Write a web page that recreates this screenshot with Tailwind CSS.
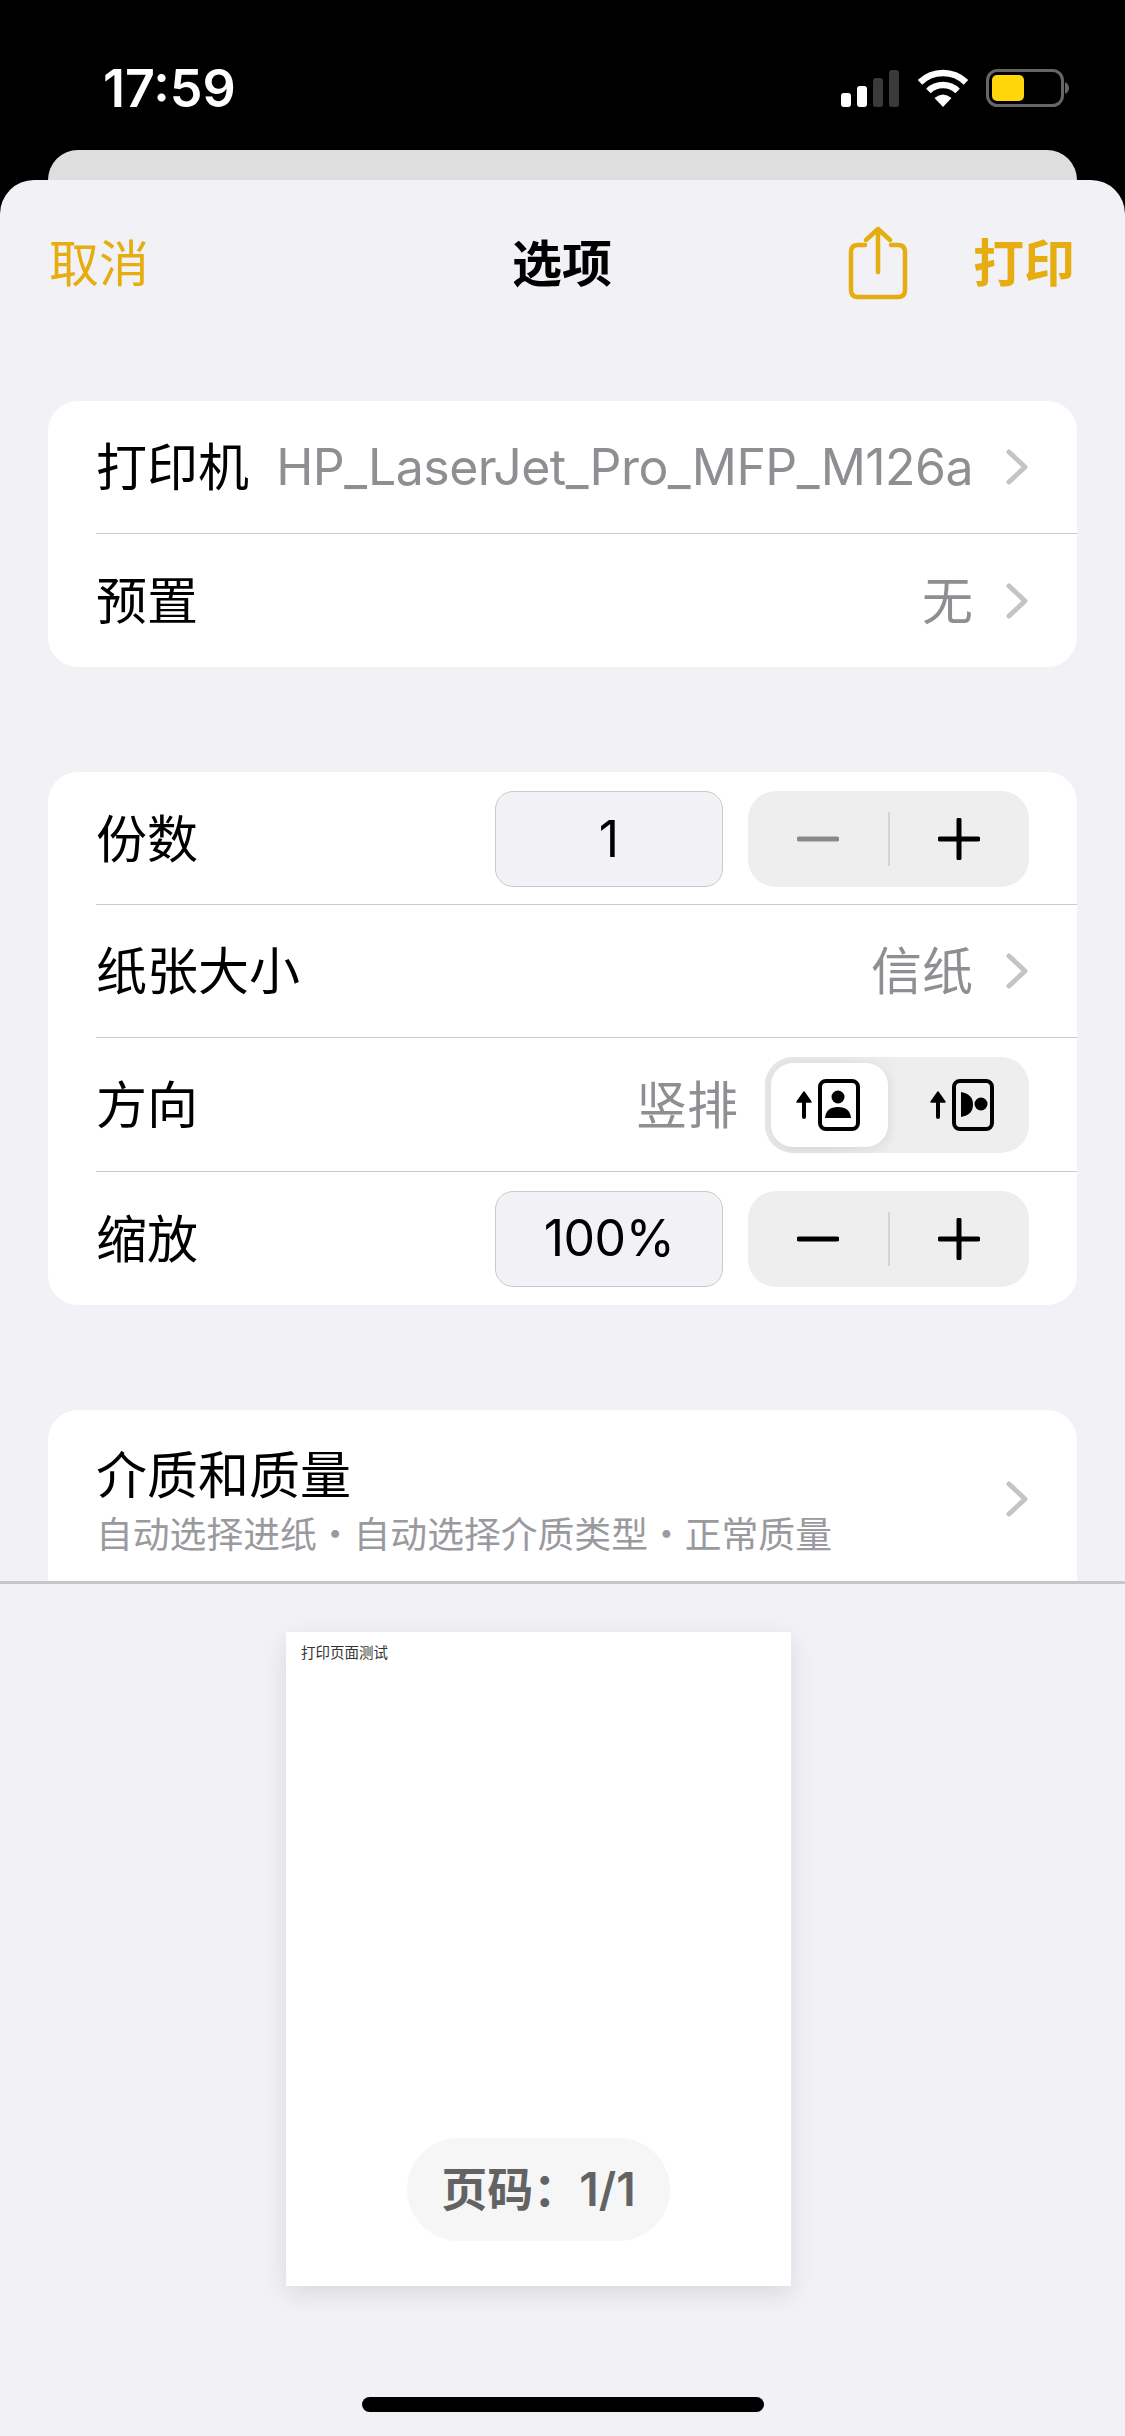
<!DOCTYPE html>
<html lang="zh-CN">
<head>
    <meta charset="UTF-8">
    <meta name="viewport" content="width=device-width, initial-scale=1.0">
    <title>选项</title>
    <script src="https://cdn.jsdelivr.net/npm/@tailwindcss/browser@4"></script>
</head>
<body class="bg-black font-['Inter','Noto_Sans_CJK_SC',sans-serif]">
    <div class="w-[1125px] h-[2436px] overflow-hidden flex flex-col">

        <!-- Status bar -->
        <div class="h-[150px] shrink-0 flex pl-[103px] pt-[61px] pr-[56px] justify-between items-start">
            <span class="text-[52px] leading-[56px] font-semibold text-white">17:59</span>
            <div class="flex items-start gap-[19px] pt-[8px]">
                <svg class="w-[58px] h-[38px]" viewBox="0 0 58 38">
                    <rect x="0" y="24" width="10" height="14" rx="3" fill="#fff"/>
                    <rect x="16" y="17" width="10" height="21" rx="3" fill="#fff"/>
                    <rect x="32" y="9" width="10" height="29" rx="3" fill="#3a3a3a"/>
                    <rect x="48" y="1" width="10" height="37" rx="3" fill="#3a3a3a"/>
                </svg>
                <svg class="w-[50px] h-[38px]" viewBox="0 0 50 38">
                    <path d="M2 13.3A33 33 0 0 1 48 13.3" fill="none" stroke="#fff" stroke-width="6.5"/>
                    <path d="M10.4 22A21 21 0 0 1 39.6 22" fill="none" stroke="#fff" stroke-width="6.5"/>
                    <path d="M25 38L16.5 29Q25 22 33.5 29Z" fill="#fff"/>
                </svg>
                <svg class="w-[83px] h-[38px] -ml-[1px]" viewBox="0 0 83 38">
                    <rect x="1.5" y="1.5" width="75" height="35" rx="10" fill="none" stroke="#666" stroke-width="3"/>
                    <rect x="6" y="6" width="32" height="26" rx="5" fill="#ffd60a"/>
                    <path d="M79 13Q83 15 83 19Q83 23 79 25Z" fill="#666"/>
                </svg>
            </div>
        </div>

        <!-- Sheet stacked behind -->
        <div class="h-[30px] shrink-0 mx-[48px] bg-[#dedede] rounded-t-[30px]"></div>

        <!-- Options sheet -->
        <div class="flex-1 bg-[#f1f1f6] rounded-t-[34px] flex flex-col">
            <div class="h-[168px] shrink-0 relative flex items-center justify-between pl-[49px] pr-[50px]">
                <span class="text-[50px] text-[#e5ad10]">取消</span>
                <span class="absolute left-[512px] text-[50px] font-semibold text-black">选项</span>
                <div class="flex items-center gap-[65px]">
                    <svg class="w-[60px] h-[74px] -mt-[2px]" viewBox="0 0 60 74" fill="none" stroke="#e5ad10" stroke-width="4.5" stroke-linecap="round" stroke-linejoin="round">
                        <path d="M17 19H10Q3 19 3 26V64Q3 71 10 71H50Q57 71 57 64V26Q57 19 50 19H43"/>
                        <path d="M30 46V3M18 14L30 3L42 14"/>
                    </svg>
                    <span class="text-[51px] font-semibold text-[#e5ad10]">打印</span>
                </div>
            </div>

            <!-- Scrolling settings list, cut off above the preview -->
            <div class="h-[1236px] shrink-0 overflow-hidden border-b-[3px] border-[#c6c6c8] px-[48px] pt-[53px] flex flex-col gap-[105px]">

                <div class="bg-white rounded-[30px] shrink-0">
                    <div class="ml-[48px] pr-[49px] h-[133px] border-b border-[#c9c9cc] flex items-center">
                        <span class="pt-[3px] text-[51px] text-black">打印机</span>
                        <span class="ml-auto text-[50px] text-[#8e8e93] tracking-[-0.55px]">HP_LaserJet_Pro_MFP_M126a</span>
                        <svg class="w-[22px] h-[36px] ml-[33px]" viewBox="0 0 22 36" fill="none" stroke="#c4c4c7" stroke-width="5" stroke-linecap="round" stroke-linejoin="round"><path d="M3 3L19 18L3 33"/></svg>
                    </div>
                    <div class="ml-[48px] pr-[49px] h-[133px] flex items-center">
                        <span class="pt-[3px] text-[51px] text-black">预置</span>
                        <span class="pt-[3px] ml-auto text-[51px] text-[#8e8e93]">无</span>
                        <svg class="w-[22px] h-[36px] ml-[33px]" viewBox="0 0 22 36" fill="none" stroke="#c4c4c7" stroke-width="5" stroke-linecap="round" stroke-linejoin="round"><path d="M3 3L19 18L3 33"/></svg>
                    </div>
                </div>

                <div class="bg-white rounded-[30px] shrink-0">
                    <div class="ml-[48px] pr-[48px] pt-[2px] h-[133px] border-b border-[#c9c9cc] flex items-center">
                        <span class="pt-[3px] text-[51px] text-black">份数</span>
                        <div class="ml-auto w-[228px] h-[96px] bg-[#f1f1f6] border border-[#c9c9cc] rounded-[18px] flex items-center justify-center text-[50px] text-black">1</div>
                        <div class="ml-[25px] w-[281px] h-[96px] bg-[#eeeeef] rounded-[28px] flex items-center">
                            <div class="flex-1 flex justify-center">
                                <svg class="w-[42px] h-[42px]" viewBox="0 0 42 42" fill="none" stroke="#8a8a8a" stroke-width="5" stroke-linecap="round"><path d="M2 21H40"/></svg>
                            </div>
                            <div class="w-[2px] h-[54px] bg-[#d4d4d6]"></div>
                            <div class="flex-1 flex justify-center">
                                <svg class="w-[42px] h-[42px]" viewBox="0 0 42 42" fill="none" stroke="#000" stroke-width="5" stroke-linecap="round"><path d="M2 21H40M21 2V40"/></svg>
                            </div>
                        </div>
                    </div>
                    <div class="ml-[48px] pr-[49px] h-[133px] border-b border-[#c9c9cc] flex items-center">
                        <span class="pt-[3px] text-[51px] text-black">纸张大小</span>
                        <span class="pt-[3px] ml-auto text-[51px] text-[#8e8e93]">信纸</span>
                        <svg class="w-[22px] h-[36px] ml-[33px]" viewBox="0 0 22 36" fill="none" stroke="#c4c4c7" stroke-width="5" stroke-linecap="round" stroke-linejoin="round"><path d="M3 3L19 18L3 33"/></svg>
                    </div>
                    <div class="ml-[48px] pr-[48px] h-[134px] border-b border-[#c9c9cc] flex items-center">
                        <span class="pt-[3px] text-[51px] text-black">方向</span>
                        <span class="pt-[3px] ml-auto text-[51px] text-[#8e8e93]">竖排</span>
                        <!-- Orientation toggle, first segment selected -->
                        <div class="ml-[27px] w-[264px] h-[96px] bg-[#eeeeef] rounded-[28px] flex items-center">
                            <div class="w-[135px] h-[96px] pl-[6px] py-[6px] bg-linear-to-r from-[#e5e5e6] via-[#e6e6e7] to-[#eeeeef] rounded-l-[28px]">
                                <div class="w-[117px] h-[84px] bg-white rounded-[22px] shadow-[3px_2px_8px_rgba(0,0,0,0.06)] flex items-center justify-center">
                                    <svg class="w-[66px] h-[54px] -ml-[3px]" viewBox="0 0 66 54">
                                        <path d="M9 39V22" stroke="#000" stroke-width="4" stroke-linecap="round"/>
                                        <path d="M2 24L9 14L16 24Z" fill="#000" stroke="#000" stroke-width="1.5" stroke-linejoin="round"/>
                                        <rect x="25" y="3" width="38" height="48" rx="6" fill="none" stroke="#000" stroke-width="4"/>
                                        <circle cx="43" cy="19" r="6.5" fill="#000"/>
                                        <path d="M30 40Q31 29 43 29Q55 29 56 40Z" fill="#000"/>
                                    </svg>
                                </div>
                            </div>
                            <div class="flex-1 flex items-center justify-center">
                                <svg class="w-[66px] h-[54px] -ml-[5px]" viewBox="0 0 66 54">
                                    <path d="M9 39V22" stroke="#000" stroke-width="4" stroke-linecap="round"/>
                                    <path d="M2 24L9 14L16 24Z" fill="#000" stroke="#000" stroke-width="1.5" stroke-linejoin="round"/>
                                    <rect x="25" y="3" width="38" height="48" rx="6" fill="none" stroke="#000" stroke-width="4"/>
                                    <path d="M32 14Q44 16 44 26.5Q44 37 32 39Z" fill="#000"/>
                                    <circle cx="52" cy="26" r="6.5" fill="#000"/>
                                </svg>
                            </div>
                        </div>
                    </div>
                    <div class="ml-[48px] pr-[48px] h-[133px] flex items-center">
                        <span class="pt-[3px] text-[51px] text-black">缩放</span>
                        <div class="ml-auto w-[228px] h-[96px] bg-[#f1f1f6] border border-[#c9c9cc] rounded-[18px] flex items-center justify-center text-[50px] tracking-[-0.5px] text-black">100%</div>
                        <div class="ml-[25px] w-[281px] h-[96px] bg-[#eeeeef] rounded-[28px] flex items-center">
                            <div class="flex-1 flex justify-center">
                                <svg class="w-[42px] h-[42px]" viewBox="0 0 42 42" fill="none" stroke="#000" stroke-width="5" stroke-linecap="round"><path d="M2 21H40"/></svg>
                            </div>
                            <div class="w-[2px] h-[54px] bg-[#d4d4d6]"></div>
                            <div class="flex-1 flex justify-center">
                                <svg class="w-[42px] h-[42px]" viewBox="0 0 42 42" fill="none" stroke="#000" stroke-width="5" stroke-linecap="round"><path d="M2 21H40M21 2V40"/></svg>
                            </div>
                        </div>
                    </div>
                </div>

                <div class="bg-white rounded-[30px] shrink-0 pb-[40px]">
                    <div class="h-[178px] pl-[48px] pr-[49px] flex items-center">
                        <div class="flex flex-col pt-[7px]">
                            <span class="text-[51px] leading-[60px] text-black">介质和质量</span>
                            <span class="text-[36.8px] leading-[48px] mt-[5px] text-[#9a9a9e]">自动选择进纸・自动选择介质类型・正常质量</span>
                        </div>
                        <svg class="w-[22px] h-[36px] ml-auto" viewBox="0 0 22 36" fill="none" stroke="#c4c4c7" stroke-width="5" stroke-linecap="round" stroke-linejoin="round"><path d="M3 3L19 18L3 33"/></svg>
                    </div>
                </div>
            </div>

            <!-- Page preview -->
            <div class="flex-1 pt-[48px] flex flex-col">
                <div class="ml-[286px] w-[505px] h-[654px] bg-white shadow-[0_8px_24px_rgba(0,0,0,0.10)] flex flex-col items-center">
                    <span class="self-start pl-[15px] pt-[12px] text-[14.5px] leading-[18px] text-[#333]">打印页面测试</span>
                    <div class="mt-auto mb-[45px] w-[263px] h-[103px] rounded-full bg-[#f6f6f6] flex items-center justify-center text-[46px] font-semibold text-[#636363]">页码：1/1</div>
                </div>
                <div class="mt-[111px] ml-[362px] w-[402px] h-[15px] rounded-full bg-black"></div>
            </div>
        </div>
    </div>
</body>
</html>
